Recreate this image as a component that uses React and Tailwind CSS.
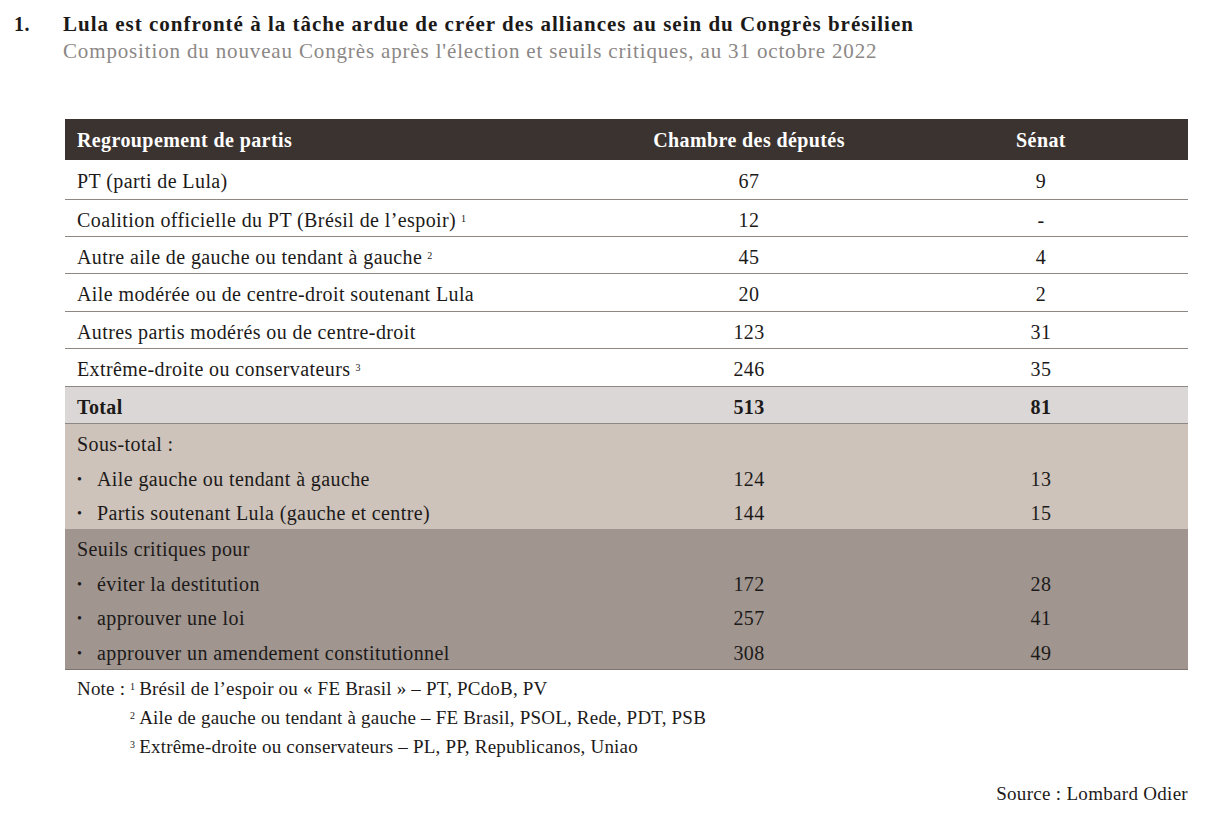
const rows = [
  { label: 'PT (parti de Lula)', ch: '67', se: '9', h: 'h-[40px]' },
  { label: 'Coalition officielle du PT (Brésil de l’espoir)', sup: '1', ch: '12', se: '-', h: 'h-[37px]' },
  { label: 'Autre aile de gauche ou tendant à gauche', sup: '2', ch: '45', se: '4', h: 'h-[37px]' },
  { label: 'Aile modérée ou de centre-droit soutenant Lula', ch: '20', se: '2', h: 'h-[38px]' },
  { label: 'Autres partis modérés ou de centre-droit', ch: '123', se: '31', h: 'h-[37px]' },
  { label: 'Extrême-droite ou conservateurs', sup: '3', ch: '246', se: '35', h: 'h-[38px]' },
];

const subtotal = [
  { label: 'Aile gauche ou tendant à gauche', ch: '124', se: '13' },
  { label: 'Partis soutenant Lula (gauche et centre)', ch: '144', se: '15' },
];

const seuils = [
  { label: 'éviter la destitution', ch: '172', se: '28' },
  { label: 'approuver une loi', ch: '257', se: '41' },
  { label: 'approuver un amendement constitutionnel', ch: '308', se: '49' },
];

function Row({ label, sup, ch, se, className = '', bold = false, bullet = false }) {
  return (
    <div className={`grid grid-cols-[560px_248px_1fr] items-center ${bold ? 'font-bold' : ''} ${className}`}>
      <div className="pl-3 pt-[3px]">
        {bullet && <span className="inline-block w-5 text-[14px] align-[2px]">•</span>}
        {label}
        {sup && <sup className="ml-[5px] text-[10px] font-normal">{sup}</sup>}
      </div>
      <div className="text-center pt-[3px]">{ch}</div>
      <div className="text-center pl-[21px] pt-[3px]">{se}</div>
    </div>
  );
}

export default function App() {
  return (
    <div className="w-[1205px] h-[817px] bg-white text-[#1c1a19] font-['Liberation_Serif',serif] tracking-[0.4px]">
      {/* Title */}
      <div className="flex pt-[11px]">
        <div className="w-[63px] pl-[14px] text-[20px] font-bold leading-[27px]">1.</div>
        <div>
          <h1 className="text-[21px] font-bold leading-[27px] tracking-[1px]">
            Lula est confronté à la tâche ardue de créer des alliances au sein du Congrès brésilien
          </h1>
          <p className="text-[21px] leading-[26px] text-[#8c8886] tracking-[0.85px]">
            Composition du nouveau Congrès après l'élection et seuils critiques, au 31 octobre 2022
          </p>
        </div>
      </div>

      {/* Table */}
      <div className="ml-[65px] mr-[17px] mt-[55px] text-[20px]">
        <div className="grid grid-cols-[560px_248px_1fr] items-center h-[41px] bg-[#3b3330] text-white font-bold">
          <div className="pl-3">Regroupement de partis</div>
          <div className="text-center">Chambre des députés</div>
          <div className="text-center pl-[21px]">Sénat</div>
        </div>
        {rows.map((r) => (
          <Row key={r.label} {...r} className={`${r.h} border-b border-[#8d8883]`} />
        ))}
        <Row label="Total" ch="513" se="81" bold className="h-[37px] bg-[#dbd7d6] border-b border-[#8d8883]" />
        <div className="bg-[#cdc3bb] pt-[1px] pb-[1px]">
          <div className="pl-3 pt-[3px] h-[35px] flex items-center">Sous-total :</div>
          {subtotal.map((r) => (
            <Row key={r.label} {...r} bullet className="h-[34px]" />
          ))}
        </div>
        <div className="bg-[#a0958f] border-b border-[#7d746f] pt-[1px]">
          <div className="pl-3 pt-[3px] h-[35px] flex items-center">Seuils critiques pour</div>
          {seuils.map((r) => (
            <Row key={r.label} {...r} bullet className="h-[34.5px]" />
          ))}
        </div>

        {/* Notes */}
        <div className="mt-[4px] pl-3 text-[19px] leading-[29px] tracking-[0.2px]">
          <div className="flex">
            <span className="w-[53px]">Note :</span>
            <span><sup className="text-[10px] mr-1">1</sup>Brésil de l’espoir ou « FE Brasil » – PT, PCdoB, PV</span>
          </div>
          <div className="pl-[53px]"><sup className="text-[10px] mr-1">2</sup>Aile de gauche ou tendant à gauche – FE Brasil, PSOL, Rede, PDT, PSB</div>
          <div className="pl-[53px]"><sup className="text-[10px] mr-1">3</sup>Extrême-droite ou conservateurs – PL, PP, Republicanos, Uniao</div>
        </div>

        <div className="mt-[19px] text-right text-[19px] tracking-[0.3px]">Source : Lombard Odier</div>
      </div>
    </div>
  );
}
